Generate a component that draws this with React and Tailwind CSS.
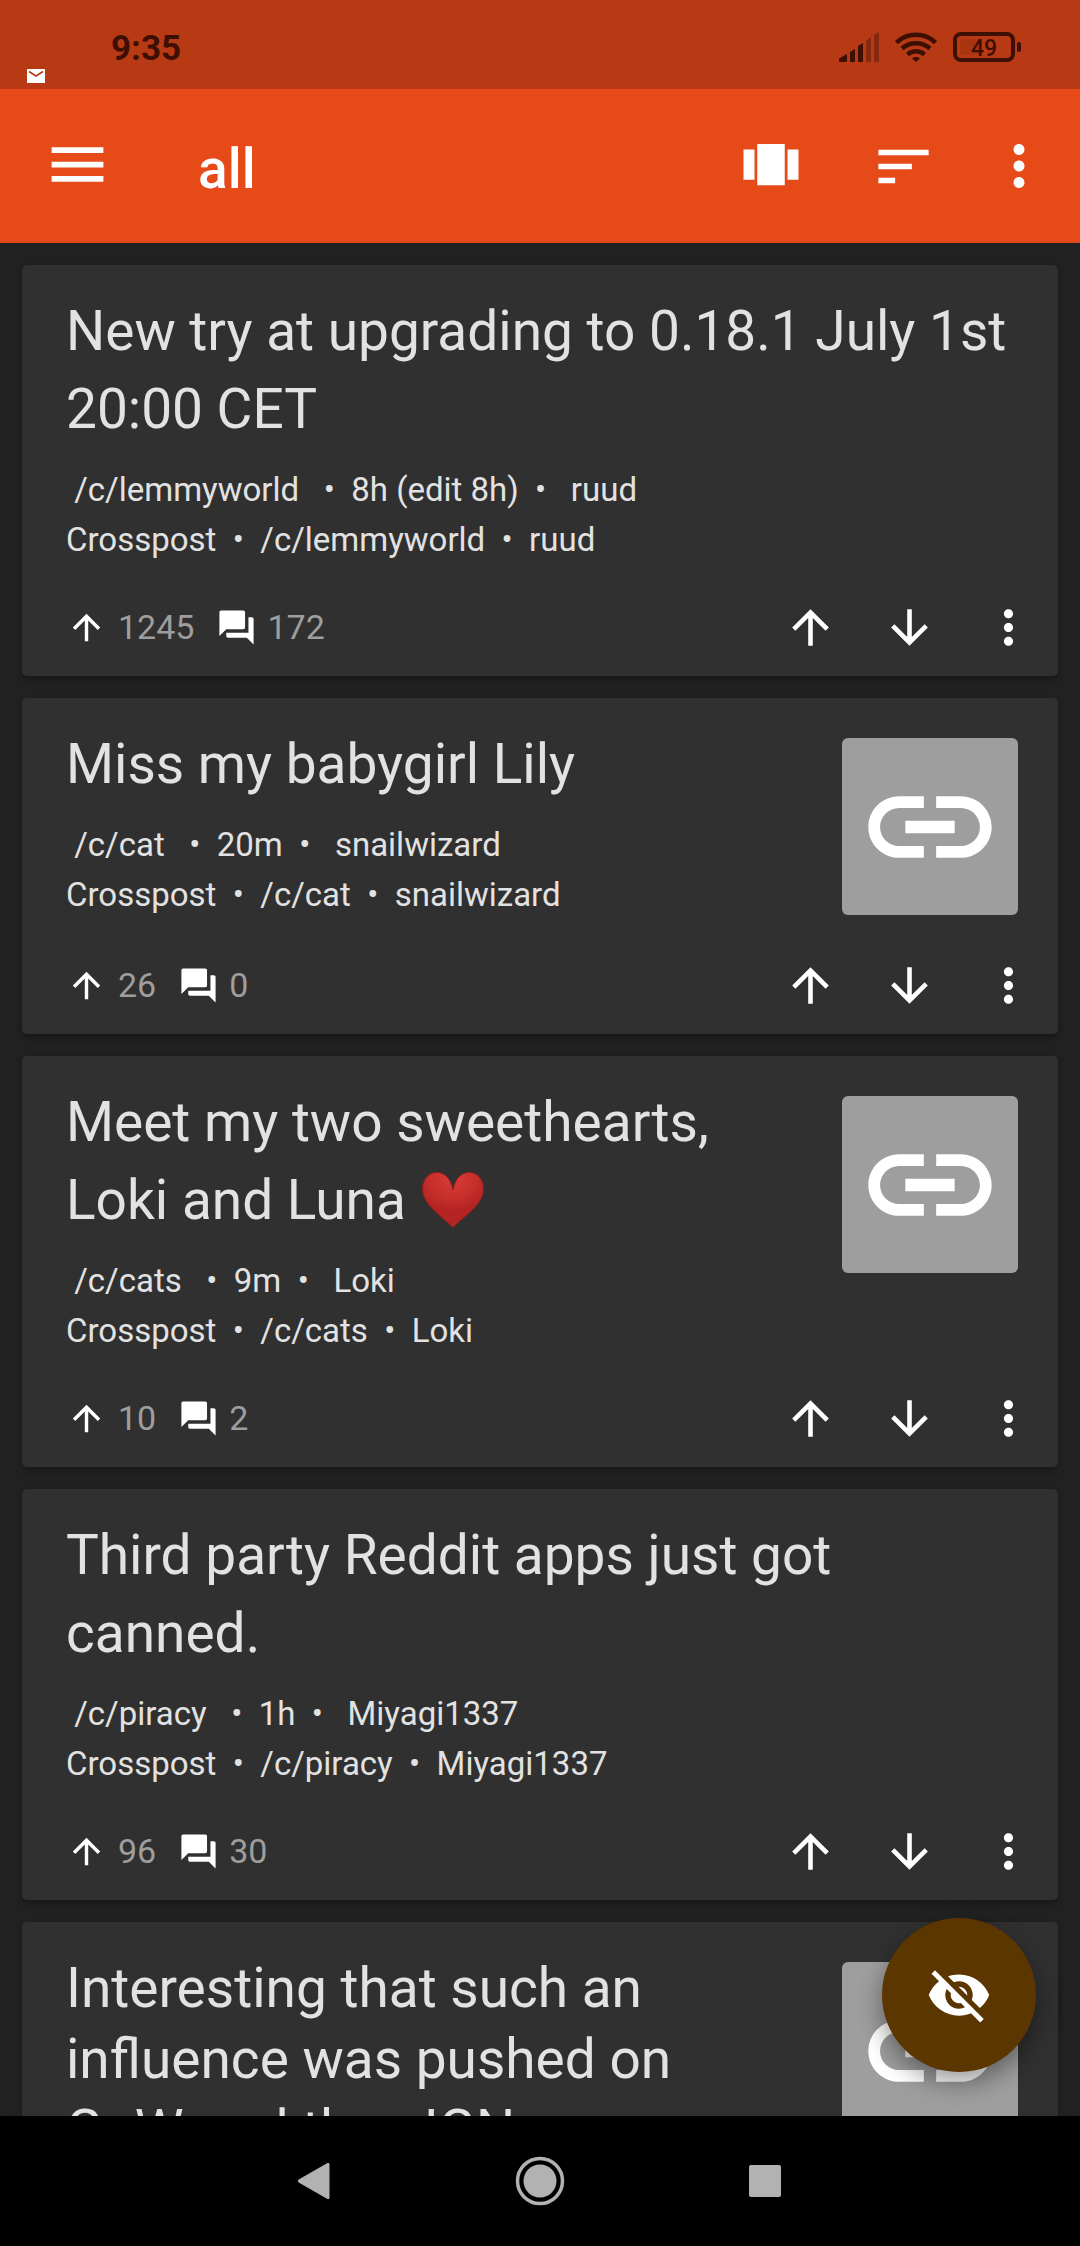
import { MdArrowDownward, MdArrowUpward, MdForum, MdLink, MdMenu, MdMoreVert, MdSort, MdVisibilityOff } from 'react-icons/md'

const POSTS = [
    {
        id: 1,
        title: 'New try at upgrading to 0.18.1 July 1st 20:00 CET',
        meta: { community: '/c/lemmyworld', age: '8h (edit 8h)', author: 'ruud', score: 1245, comments: 172 },
    },
    {
        id: 2,
        title: 'Miss my babygirl Lily',
        link: true,
        meta: { community: '/c/cat', age: '20m', author: 'snailwizard', score: 26, comments: 0 },
    },
    {
        id: 3,
        title: 'Meet my two sweethearts, Loki and Luna',
        heart: true,
        link: true,
        meta: { community: '/c/cats', age: '9m', author: 'Loki', score: 10, comments: 2 },
    },
    {
        id: 4,
        title: 'Third party Reddit apps just got canned.',
        meta: { community: '/c/piracy', age: '1h', author: 'Miyagi1337', score: 96, comments: 30 },
    },
    // details not loaded yet
    {
        id: 5,
        title: 'Interesting that such an influence was pushed on GoW and then IGN',
        dense: true,
        link: true,
    },
]

function Signal() {
    return (
        <svg width="40" height="30" viewBox="0 0 40 30" fill="#3d1003" aria-label="Signal">
            <path d="M0 26.500L8 22v7a1 1 0 0 1-1 1H1a1 1 0 0 1-1-1z" />
            <path d="M11 20l5-3v12a1 1 0 0 1-1 1h-3a1 1 0 0 1-1-1z" />
            <path d="M19 14l5-3v18a1 1 0 0 1-1 1h-3a1 1 0 0 1-1-1z" />
            <path opacity="0.4" d="M27 9l5-4v24a1 1 0 0 1-1 1h-3a1 1 0 0 1-1-1z" />
            <path opacity="0.4" d="M35 3l5-3v29a1 1 0 0 1-1 1h-3a1 1 0 0 1-1-1z" />
        </svg>
    )
}

function Wifi() {
    return (
        <svg width="42" height="30" viewBox="0 0 42 30" fill="none" stroke="#3d1003" strokeWidth="4.500" aria-label="Wi-Fi">
            <path d="M1.500 10.500a28.500 28.500 0 0 1 39 0" />
            <path d="M7 16.500a21 21 0 0 1 28 0" />
            <path d="M12.500 22.500a13 13 0 0 1 17 0" />
            <path d="M17 26.500a5.500 5.500 0 0 1 8 0L21 30z" fill="#3d1003" stroke="none" />
        </svg>
    )
}

function Battery() {
    return (
        <div className="flex items-center gap-[2px]">
            <div className="relative flex h-[30px] w-[62px] items-center justify-center rounded-[8px] border-4 border-[#3d1003] pt-[2px]">
                <div className="absolute top-[3px] bottom-[3px] left-[3px] w-[18px] rounded-[2px] bg-[#a83410]" />
                <span className="relative text-[23px] leading-none font-medium text-[#3d1003]">49</span>
            </div>
            <div className="h-[10px] w-[4px] rounded-[2px] bg-[#3d1003]" />
        </div>
    )
}

function StatusBar() {
    return (
        <div className="flex h-[89px] shrink-0 items-start bg-[#b83a14] pr-[59px] pl-[27px]">
            <svg className="mt-[69px]" width="18" height="14" viewBox="0 0 18 14" aria-label="Mail">
                <rect width="18" height="14" fill="#fff" />
                <path d="M2 2.500l7 4.500 7-4.500" fill="none" stroke="#b83a14" strokeWidth="1.500" />
            </svg>
            <span className="mt-[28px] ml-[66px] text-[35px] leading-[41px] font-bold text-[#3d1003]">9:35</span>
            <div className="mt-[32px] ml-auto flex items-center gap-4">
                <Signal />
                <Wifi />
                <Battery />
            </div>
        </div>
    )
}

function AppBar() {
    return (
        <header className="flex h-[154px] shrink-0 items-center bg-[#e64a19] pr-[11px] text-white">
            <button aria-label="Menu" className="flex h-full w-[154px] items-center justify-center pb-[3px]">
                <MdMenu size={69} />
            </button>
            <h1 className="ml-[44px] flex-1 pt-[5px] text-[55px] leading-[64px] font-medium">all</h1>
            <button aria-label="Change view" className="flex h-full w-[132px] items-center justify-center">
                <svg width="66" height="66" viewBox="0 0 24 24" fill="currentColor">
                    <path d="M7 19h10V4H7v15zm-5-2h4V6H2v11zM18 6v11h4V6h-4z" />
                </svg>
            </button>
            <button aria-label="Sort" className="flex h-full w-[132px] items-center justify-center">
                <MdSort size={67} />
            </button>
            <button aria-label="More" className="flex h-full w-[100px] items-center justify-center">
                <MdMoreVert size={66} />
            </button>
        </header>
    )
}

function Heart() {
    return (
        <svg className="ml-[2px] inline-block align-[-9px]" width="62" height="56" viewBox="0 0 62 56" role="img" aria-label="❤️">
            <defs>
                <radialGradient id="heart" cx="0.5" cy="0.1" r="0.6">
                    <stop offset="0" stopColor="#d83c36" />
                    <stop offset="0.6" stopColor="#c8302b" />
                    <stop offset="1" stopColor="#b42423" />
                </radialGradient>
            </defs>
            <path
                d="M31 18C29 7 23 .5 15 .5 6 .5.500 8 .500 17 .500 33 20 44 31 55.500 42 44 61.500 33 61.500 17 61.500 8 56 .5 47 .5 39 .5 33 7 31 18z"
                fill="url(#heart)"
                stroke="#8f1f1d"
                strokeWidth="1"
            />
        </svg>
    )
}

function PostMeta({ community, age, author }) {
    return (
        <div className="mt-[17px] text-[33px] leading-[50px] whitespace-pre">
            <p>
                {' '}<a href="#community">{community}</a>{`   •  ${age}  •   `}<a href="#user">{author}</a>
            </p>
            <p>{`Crosspost  •  ${community}  •  ${author}`}</p>
        </div>
    )
}

function PostFooter({ score, comments }) {
    return (
        <div className="flex h-[98px] items-center pl-[44px] text-white">
            <MdArrowUpward size={41} />
            <span className="ml-[11px] text-[34px] text-[#9e9e9e]">{score}</span>
            <MdForum size={41} className="ml-[22px]" />
            <span className="ml-[10px] text-[34px] text-[#9e9e9e]">{comments}</span>
            <div className="ml-auto flex h-full">
                <button aria-label="Upvote" className="flex w-[99px] items-center justify-center">
                    <MdArrowUpward size={55} />
                </button>
                <button aria-label="Downvote" className="flex w-[99px] items-center justify-center">
                    <MdArrowDownward size={55} />
                </button>
                <button aria-label="More" className="flex w-[99px] items-center justify-center">
                    <MdMoreVert size={55} />
                </button>
            </div>
        </div>
    )
}

function Post({ post }) {
    return (
        <article className="shrink-0 rounded-[5px] bg-[#303030] shadow-[0_3px_6px_rgba(0,0,0,0.3)]">
            <div className="flex items-start gap-[66px] pr-[40px] pl-[44px]">
                <div className="min-w-0 flex-1 pt-[27px] pb-[13px] text-[#e2e2e2]">
                    <h2 className={`text-[55px] ${post.dense ? 'pt-1 leading-[71px]' : 'leading-[78px]'}`}>
                        {post.title} {post.heart && <Heart />}
                    </h2>
                    {post.meta && <PostMeta {...post.meta} />}
                </div>
                {post.link && (
                    <a href="#link" aria-label="Open link" className="mt-[40px] mb-[21px] flex h-[177px] w-[176px] shrink-0 items-center justify-center rounded-[6px] bg-[#9e9e9e] text-white">
                        <MdLink size={148} />
                    </a>
                )}
            </div>
            {post.meta && <PostFooter {...post.meta} />}
        </article>
    )
}

function SystemNav() {
    return (
        <nav className="flex h-[130px] shrink-0 justify-center bg-black text-[#b2b2b2]">
            <button aria-label="Back" className="flex w-[225px] items-center justify-center">
                <svg width="34" height="38" viewBox="0 0 34 38" fill="currentColor">
                    <path d="M.7 17.500L29 1.300c1.300-.8 2.500-.2 2.500 1.200v33c0 1.400-1.200 2-2.500 1.200L.7 20.500c-1-.7-1-2.300 0-3z" />
                </svg>
            </button>
            <button aria-label="Home" className="flex w-[225px] items-center justify-center">
                <svg width="50" height="50" viewBox="0 0 50 50" fill="currentColor">
                    <circle cx="25" cy="25" r="22.500" fill="none" stroke="currentColor" strokeWidth="3.500" />
                    <circle cx="25" cy="25" r="16.500" />
                </svg>
            </button>
            <button aria-label="Recents" className="flex w-[225px] items-center justify-center">
                <span className="size-[32px] rounded-[2px] bg-[#b2b2b2]" />
            </button>
        </nav>
    )
}

export default function App() {
    return (
        <div className="flex h-screen flex-col bg-[#212121] font-['Roboto',sans-serif]">
            <StatusBar />
            <AppBar />
            <div className="relative min-h-0 flex-1">
                <main className="flex h-full flex-col gap-[22px] overflow-hidden p-[22px]">
                    {POSTS.map(p => <Post key={p.id} post={p} />)}
                </main>
                {/* Hide read posts */}
                <button aria-label="Hide read" className="absolute right-[44px] bottom-[44px] flex size-[154px] items-center justify-center rounded-full bg-[#5c3600] text-white shadow-[0_10px_24px_rgba(0,0,0,0.4)]">
                    <MdVisibilityOff size={66} />
                </button>
            </div>
            <SystemNav />
        </div>
    )
}
